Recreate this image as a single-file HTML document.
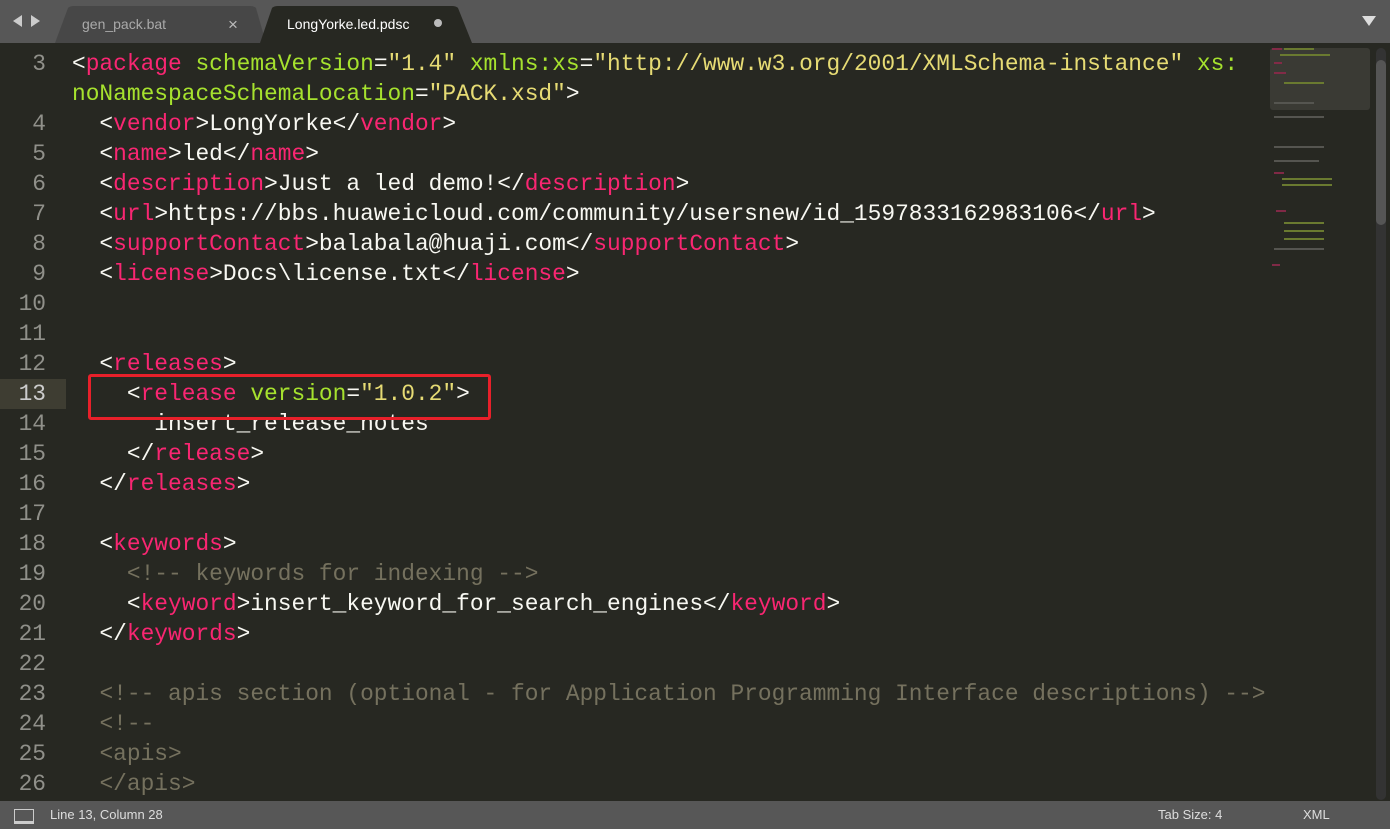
<!DOCTYPE html>
<html><head><meta charset="utf-8"><style>
body{margin:0;width:1390px;height:829px;overflow:hidden;background:#272822;font-family:"Liberation Sans",sans-serif;position:relative}
#tabs{position:absolute;left:0;top:0;width:1390px;height:43px;background:#575757}
.tab{position:absolute;top:6px;height:37px;font-size:14px;line-height:37px}
#code{position:absolute;left:0;top:49px;font-family:"Liberation Mono",monospace;font-size:22.87px;line-height:30px;color:#f8f8f2;white-space:pre}
.ln{position:absolute;left:0;width:46px;text-align:right;color:#90908a}
.l{position:absolute;left:72px}
.t{color:#f92672}.a{color:#a6e22e}.s{color:#e6db74}.c{color:#75715e}
#status{position:absolute;left:0;top:801px;width:1390px;height:28px;background:#575757;color:#ddd;font-size:13px;line-height:28px}
</style></head><body>
<div id="tabs">
<div style="position:absolute;left:13px;top:15px;width:0;height:0;border-top:6px solid transparent;border-bottom:6px solid transparent;border-right:9px solid #ccc"></div>
<div style="position:absolute;left:31px;top:15px;width:0;height:0;border-top:6px solid transparent;border-bottom:6px solid transparent;border-left:9px solid #ccc"></div>
<svg style="position:absolute;left:0;top:0" width="500" height="43"><path d="M55 43 L68 8 Q70 6 74 6 L250 6 Q254 6 256 8 L266 43Z" fill="#474747"/><path d="M260 43 L272 8 Q274 6 278 6 L452 6 Q456 6 458 8 L472 43Z" fill="#272822"/></svg>
<div class="tab" style="left:82px;color:#aaa">gen_pack.bat</div>
<div class="tab" style="left:228px;color:#bbb;font-size:17px">×</div>
<div class="tab" style="left:287px;color:#fff">LongYorke.led.pdsc</div>
<div style="position:absolute;left:434px;top:19px;width:8px;height:8px;border-radius:50%;background:#bbb"></div>
<div style="position:absolute;left:1362px;top:16px;border-left:7px solid transparent;border-right:7px solid transparent;border-top:10px solid #ddd"></div>
</div>
<div style="position:absolute;left:0;top:379px;width:66px;height:30px;background:#3e3d32"></div>
<div id="code">
<div class="ln" style="top:0">3</div><div class="l" style="top:0">&lt;<span class="t">package</span> <span class="a">schemaVersion</span>=<span class="s">"1.4"</span> <span class="a">xmlns:xs</span>=<span class="s">"http://www.w3.org/2001/XMLSchema-instance"</span> <span class="a">xs:</span></div>
<div class="l" style="top:30px"><span class="a">noNamespaceSchemaLocation</span>=<span class="s">"PACK.xsd"</span>&gt;</div>
<div class="ln" style="top:60px">4</div><div class="l" style="top:60px">  &lt;<span class="t">vendor</span>&gt;LongYorke&lt;/<span class="t">vendor</span>&gt;</div>
<div class="ln" style="top:90px">5</div><div class="l" style="top:90px">  &lt;<span class="t">name</span>&gt;led&lt;/<span class="t">name</span>&gt;</div>
<div class="ln" style="top:120px">6</div><div class="l" style="top:120px">  &lt;<span class="t">description</span>&gt;Just a led demo!&lt;/<span class="t">description</span>&gt;</div>
<div class="ln" style="top:150px">7</div><div class="l" style="top:150px">  &lt;<span class="t">url</span>&gt;https://bbs.huaweicloud.com/community/usersnew/id_1597833162983106&lt;/<span class="t">url</span>&gt;</div>
<div class="ln" style="top:180px">8</div><div class="l" style="top:180px">  &lt;<span class="t">supportContact</span>&gt;balabala@huaji.com&lt;/<span class="t">supportContact</span>&gt;</div>
<div class="ln" style="top:210px">9</div><div class="l" style="top:210px">  &lt;<span class="t">license</span>&gt;Docs\license.txt&lt;/<span class="t">license</span>&gt;</div>
<div class="ln" style="top:240px">10</div>
<div class="ln" style="top:270px">11</div>
<div class="ln" style="top:300px">12</div><div class="l" style="top:300px">  &lt;<span class="t">releases</span>&gt;</div>
<div class="ln" style="top:330px;color:#ccc">13</div><div class="l" style="top:330px">    &lt;<span class="t">release</span> <span class="a">version</span>=<span class="s">"1.0.2"</span>&gt;</div>
<div class="ln" style="top:360px">14</div><div class="l" style="top:360px">      insert_release_notes</div>
<div class="ln" style="top:390px">15</div><div class="l" style="top:390px">    &lt;/<span class="t">release</span>&gt;</div>
<div class="ln" style="top:420px">16</div><div class="l" style="top:420px">  &lt;/<span class="t">releases</span>&gt;</div>
<div class="ln" style="top:450px">17</div>
<div class="ln" style="top:480px">18</div><div class="l" style="top:480px">  &lt;<span class="t">keywords</span>&gt;</div>
<div class="ln" style="top:510px">19</div><div class="l" style="top:510px">    <span class="c">&lt;!-- keywords for indexing --&gt;</span></div>
<div class="ln" style="top:540px">20</div><div class="l" style="top:540px">    &lt;<span class="t">keyword</span>&gt;insert_keyword_for_search_engines&lt;/<span class="t">keyword</span>&gt;</div>
<div class="ln" style="top:570px">21</div><div class="l" style="top:570px">  &lt;/<span class="t">keywords</span>&gt;</div>
<div class="ln" style="top:600px">22</div>
<div class="ln" style="top:630px">23</div><div class="l" style="top:630px">  <span class="c">&lt;!-- apis section (optional - for Application Programming Interface descriptions) --&gt;</span></div>
<div class="ln" style="top:660px">24</div><div class="l" style="top:660px">  <span class="c">&lt;!--</span></div>
<div class="ln" style="top:690px">25</div><div class="l" style="top:690px">  <span class="c">&lt;apis&gt;</span></div>
<div class="ln" style="top:720px">26</div><div class="l" style="top:720px">  <span class="c">&lt;/apis&gt;</span></div>
</div>
<div style="position:absolute;left:88px;top:374px;width:397px;height:40px;border:3px solid #e8202a;border-radius:3px"></div>
<div style="position:absolute;left:1270px;top:48px;width:100px;height:62px;background:#3a3a34;border-radius:3px"></div>
<svg style="position:absolute;left:1270px;top:42px" width="105" height="240">
<g fill="#8a2a4a" opacity=".9"><rect x="2" y="6" width="10" height="2"/><rect x="4" y="20" width="8" height="2"/><rect x="4" y="30" width="12" height="2"/><rect x="4" y="130" width="10" height="2"/><rect x="6" y="168" width="10" height="2"/><rect x="2" y="222" width="8" height="2"/></g>
<g fill="#6a7a30"><rect x="14" y="6" width="30" height="2"/><rect x="10" y="12" width="50" height="2"/><rect x="14" y="40" width="40" height="2"/><rect x="12" y="136" width="50" height="2"/><rect x="12" y="142" width="50" height="2"/><rect x="14" y="180" width="40" height="2"/><rect x="14" y="188" width="40" height="2"/><rect x="14" y="196" width="40" height="2"/></g>
<g fill="#555550"><rect x="4" y="60" width="40" height="2"/><rect x="4" y="74" width="50" height="2"/><rect x="4" y="104" width="50" height="2"/><rect x="4" y="118" width="45" height="2"/><rect x="4" y="206" width="50" height="2"/></g>
</svg>
<div style="position:absolute;left:1376px;top:48px;width:10px;height:752px;background:#333;border-radius:5px"></div>
<div style="position:absolute;left:1376px;top:60px;width:10px;height:165px;background:#555;border-radius:5px"></div>
<div id="status">
<div style="position:absolute;left:14px;top:8px;width:18px;height:11px;border:1px solid #ccc;border-bottom-width:3px"></div>
<span style="position:absolute;left:50px">Line 13, Column 28</span>
<span style="position:absolute;left:1158px">Tab Size: 4</span>
<span style="position:absolute;left:1303px">XML</span>
</div>
</body></html>
